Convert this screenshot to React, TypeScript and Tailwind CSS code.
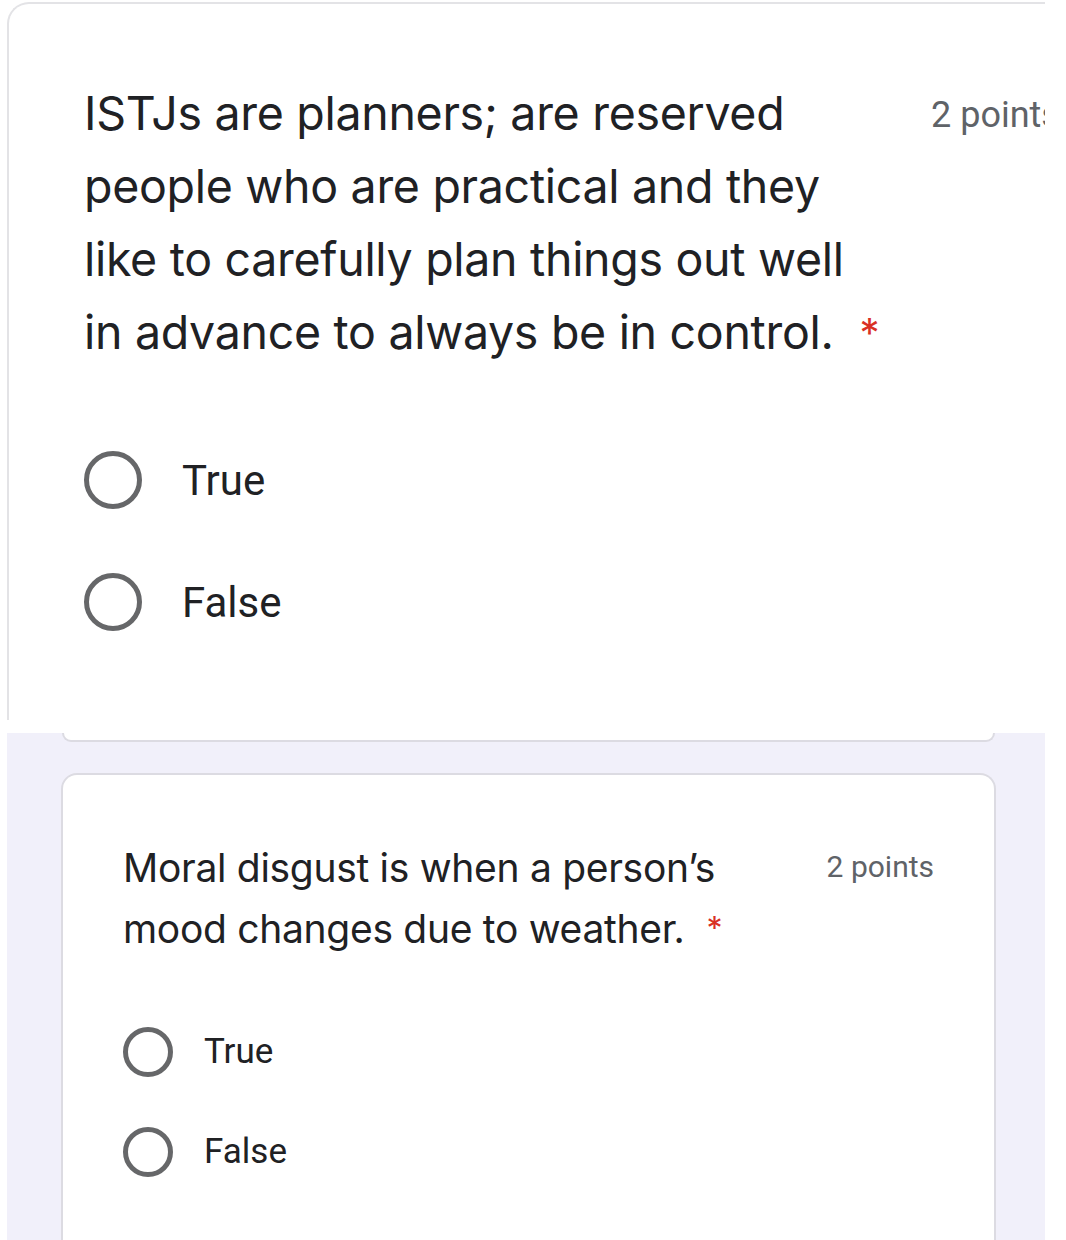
import React from 'react';

interface Question {
  lines: string[];
  points: string;
  options: string[];
}

const first: Question = {
  lines: [
    'ISTJs are planners; are reserved',
    'people who are practical and they',
    'like to carefully plan things out well',
    'in advance to always be in control.',
  ],
  points: '2 points',
  options: ['True', 'False'],
};

const second: Question = {
  lines: ['Moral disgust is when a person\u2019s', 'mood changes due to weather.'],
  points: '2 points',
  options: ['True', 'False'],
};

// Radio vide, style Google Forms
function Radio({ big }: { big?: boolean }) {
  return big ? (
    <div className="w-[58px] h-[58px] rounded-full border-[5px] border-[#666769] shrink-0" />
  ) : (
    <div className="w-[50px] h-[50px] rounded-full border-[5px] border-[#666769] shrink-0" />
  );
}

export default function App() {
  return (
    <div className="w-[1066px] h-[1240px] bg-white overflow-hidden font-['Roboto',sans-serif]">
      {/* --- Carte zoomée (haut) --- */}
      <div className="h-[733px] pt-[2px] pl-[7px]">
        <div className="w-[1038px] h-[718px] border-l-2 border-t-2 border-[#e3e3e6] rounded-tl-[22px] pl-[75px] pt-[73px]">
          <div className="flex items-start">
            <h2 className="w-[847px] text-[46.5px] leading-[73px] text-[#202124] font-['Inter',sans-serif] tracking-[-0.3px]">
              {first.lines.map((line, i) => (
                <span key={i} className="block whitespace-nowrap">
                  {line}
                  {i === first.lines.length - 1 && (
                    <span className="text-[#d93025] text-[40px] align-top ml-[26px]">*</span>
                  )}
                </span>
              ))}
            </h2>
            <div className="mt-[18px] text-[36px] leading-[40px] text-[#5f6368] whitespace-nowrap overflow-hidden w-[114px]">
              {first.points}
            </div>
          </div>

          <div className="mt-[82px] flex flex-col gap-[64px]">
            {first.options.map((opt) => (
              <div key={opt} className="flex items-center h-[58px]">
                <Radio big />
                <span className="ml-[40px] text-[42px] text-[#202124]">{opt}</span>
              </div>
            ))}
          </div>
        </div>
      </div>

      {/* --- Capture normale (bas) --- */}
      <div className="ml-[7px] w-[1038px] h-[507px] bg-[#f1f0fa]">
        {/* bas de la carte précédente */}
        <div className="ml-[55px] w-[933px] h-[9px] bg-white border-2 border-t-0 border-[#dcdbe2] rounded-b-[12px]" />

        <div className="mt-[31px] ml-[54px] w-[935px] h-[500px] bg-white border-2 border-b-0 border-[#dcdbe2] rounded-t-[16px] pl-[60px] pr-[60px] pt-[62px]">
          <div className="flex items-start justify-between">
            <h2 className="w-[640px] text-[39px] leading-[61px] text-[#202124] font-['Inter',sans-serif] tracking-[-0.3px]">
              {second.lines.map((line, i) => (
                <span key={i} className="block whitespace-nowrap">
                  {line}
                  {i === second.lines.length - 1 && (
                    <span className="text-[#d93025] text-[32px] align-top ml-[22px]">*</span>
                  )}
                </span>
              ))}
            </h2>
            <div className="mt-[12px] text-[30px] leading-[36px] text-[#5f6368] whitespace-nowrap">
              {second.points}
            </div>
          </div>

          <div className="mt-[68px] flex flex-col gap-[50px]">
            {second.options.map((opt) => (
              <div key={opt} className="flex items-center h-[50px]">
                <Radio />
                <span className="ml-[31px] text-[35px] text-[#202124]">{opt}</span>
              </div>
            ))}
          </div>
        </div>
      </div>
    </div>
  );
}
